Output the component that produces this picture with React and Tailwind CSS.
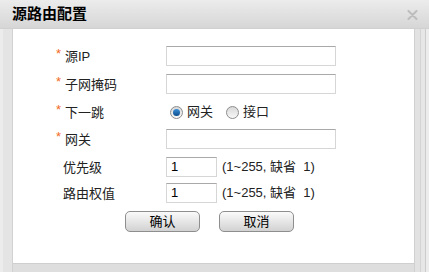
import React from "react";

const font = { fontFamily: '"Liberation Sans", "Noto Sans CJK SC", sans-serif' };

function Label({ req, children }) {
  return (
    <div className="w-[110px] flex items-center text-[13px] text-[#222] leading-none">
      {req ? (
        <span className="text-[#f26b1d] w-[9px] text-[13px] relative top-[-3px]">*</span>
      ) : (
        <span className="w-[7px]" />
      )}
      <span>{children}</span>
    </div>
  );
}

function Input({ w, value }) {
  return (
    <div
      className={`${w} h-[20px] bg-white border border-[#d6d6d6] border-t-[#a9a9a9] flex items-center pl-[4px] text-[13px] text-black`}
    >
      {value}
    </div>
  );
}

function Radio({ checked, children }) {
  return (
    <div className="flex items-center">
      <div className="w-[13px] h-[13px] rounded-full border border-[#8c8c8c] bg-gradient-to-b from-[#d8d8d8] to-[#f8f8f8] flex items-center justify-center">
        {checked && (
          <div className="w-[7px] h-[7px] rounded-full bg-gradient-to-b from-[#3a8fd8] to-[#0b4d8c]" />
        )}
      </div>
      <span className="ml-[4px] text-[13px] text-[#222]">{children}</span>
    </div>
  );
}

function Btn({ children }) {
  return (
    <div className="w-[75px] h-[21px] rounded-[5px] border border-[#8e8e8e] bg-gradient-to-b from-[#fafafa] via-[#e6e6e6] to-[#d2d2d2] flex items-center justify-center text-[13px] text-black">
      {children}
    </div>
  );
}

function Range() {
  return <span className="ml-[5px] text-[13px] text-[#222] whitespace-pre">(1~255, 缺省  1)</span>;
}

export default function App() {
  return (
    <div className="w-[429px] h-[272px] bg-[#dedede] flex flex-col overflow-hidden" style={font}>
      <div className="h-[29px] shrink-0 bg-gradient-to-b from-[#ececec] to-[#d6d6d6] flex items-center justify-between pl-[12px] pr-[11px] border-b border-[#d0d0d0]">
        <span className="text-[15px] font-bold text-black">源路由配置</span>
        <svg width="11" height="10" viewBox="0 0 11 10" className="mt-[1px]">
          <path d="M1.5 1 L9.5 9 M9.5 1 L1.5 9" stroke="#bdbdbd" strokeWidth="2" strokeLinecap="round" />
        </svg>
      </div>
      <div className="flex flex-1">
        <div className="w-[13px] bg-[#e4e4e4] border-l-[3px] border-[#ececec] shrink-0 border-r border-r-[#d2d2d2]" />
        <div className="w-[401px] h-[235px] bg-white flex flex-col pl-[43px] pt-[17px] border-b border-[#cfcfcf]">
          <div className="flex items-center h-[20px]">
            <Label req>源IP</Label>
            <Input w="w-[170px]" />
          </div>
          <div className="flex items-center h-[20px] mt-[8px]">
            <Label req>子网掩码</Label>
            <Input w="w-[170px]" />
          </div>
          <div className="flex items-center h-[20px] mt-[8px]">
            <Label req>下一跳</Label>
            <div className="flex items-center pl-[4px] gap-[13px]">
              <Radio checked>网关</Radio>
              <Radio>接口</Radio>
            </div>
          </div>
          <div className="flex items-center h-[20px] mt-[7px]">
            <Label req>网关</Label>
            <Input w="w-[170px]" />
          </div>
          <div className="flex items-center h-[20px] mt-[8px]">
            <Label>优先级</Label>
            <Input w="w-[51px]" value="1" />
            <Range />
          </div>
          <div className="flex items-center h-[20px] mt-[6px]">
            <Label>路由权值</Label>
            <Input w="w-[51px]" value="1" />
            <Range />
          </div>
          <div className="flex mt-[8px] pl-[69px] gap-[19px]">
            <Btn>确认</Btn>
            <Btn>取消</Btn>
          </div>
        </div>
        <div className="flex-1 bg-[#e2e2e2] border-l border-[#d0d0d0] flex justify-end">
          <div className="w-[5px] border-l border-[#d4d4d4] bg-[#e6e6e6]" />
          <div className="w-[4px] border-l border-[#cccccc] bg-[#ececec]" />
        </div>
      </div>
    </div>
  );
}
